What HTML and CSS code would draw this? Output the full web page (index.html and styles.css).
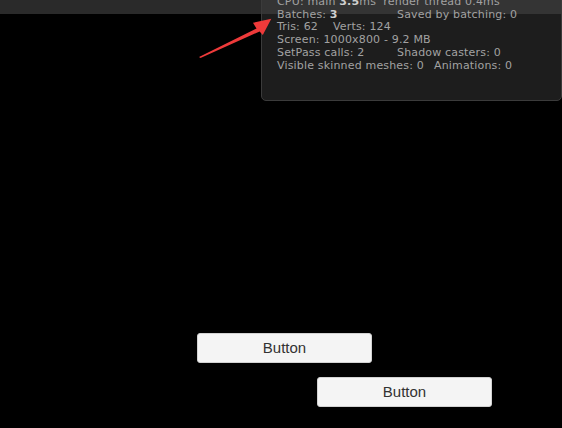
FILE: index.html
```html
<!DOCTYPE html>
<html>
<head>
<meta charset="utf-8">
<link rel="stylesheet" href="styles.css">
</head>
<body>
<div class="topbar"></div>
<main class="stage">
  <button class="btn btn-first">Button</button>
  <button class="btn btn-second">Button</button>
</main>

<section class="stats">
  <div class="row">CPU: main <b>3.5</b>ms&nbsp;&nbsp;render thread 0.4ms</div>
  <div class="row"><span class="col col-wide">Batches: <b>3</b></span><span class="col">Saved by batching: 0</span></div>
  <div class="row"><span class="col col-tris">Tris: 62</span><span class="col">Verts: 124</span></div>
  <div class="row">Screen: 1000x800 - 9.2 MB</div>
  <div class="row"><span class="col col-wide">SetPass calls: 2</span><span class="col">Shadow casters: 0</span></div>
  <div class="row"><span class="col col-vis">Visible skinned meshes: 0</span><span class="col">Animations: 0</span></div>
</section>

<svg class="arrow" width="80" height="46" viewBox="195 14 80 46" aria-hidden="true">
  <polygon points="199,57 256.5,28.5 253,22.8 271.3,18.8 262.8,35 259.6,31.5 200.5,58" fill="#ee3a3a"/>
</svg>
</body>
</html>
```

FILE: styles.css
```css
html, body {
  margin: 0;
  padding: 0;
}

body {
  width: 562px;
  height: 428px;
  overflow: hidden;
  background: #000;
  position: relative;
  font-family: "DejaVu Sans", "Liberation Sans", sans-serif;
}

.topbar {
  height: 14px;
  background: #2a2a2a;
}

.stage {
  display: flex;
  flex-direction: column;
  align-items: flex-start;
  gap: 14px;
  padding-top: 319px;
}

.btn {
  width: 175px;
  height: 30px;
  box-sizing: border-box;
  border: 1px solid #d2d2d2;
  border-radius: 3px;
  background: #f4f4f4;
  color: #323232;
  font-family: "Liberation Sans", Arial, sans-serif;
  font-size: 15px;
  line-height: 16px;
  padding: 0 0 1px;
  display: flex;
  align-items: center;
  justify-content: center;
}

.btn-first {
  margin-left: 197px;
}

.btn-second {
  margin-left: 317px;
}

.stats {
  position: absolute;
  left: 261px;
  top: -20px;
  width: 301px;
  height: 121px;
  box-sizing: border-box;
  padding: 15px 0 0 15px;
  border: 1px solid #3b3b3b;
  border-radius: 5px;
  background: rgba(67, 67, 67, 0.43);
  color: #a2a2a2;
  font-size: 11px;
  line-height: 12.7px;
  letter-spacing: 0.17px;
  white-space: nowrap;
}

.stats b {
  color: #cfcfcf;
  font-weight: bold;
}

.row {
  display: block;
}

.col {
  display: inline-block;
}

.col-wide {
  width: 120px;
}

.col-tris {
  width: 56px;
}

.col-vis {
  width: 157px;
}

.arrow {
  position: absolute;
  left: 195px;
  top: 14px;
}
```
